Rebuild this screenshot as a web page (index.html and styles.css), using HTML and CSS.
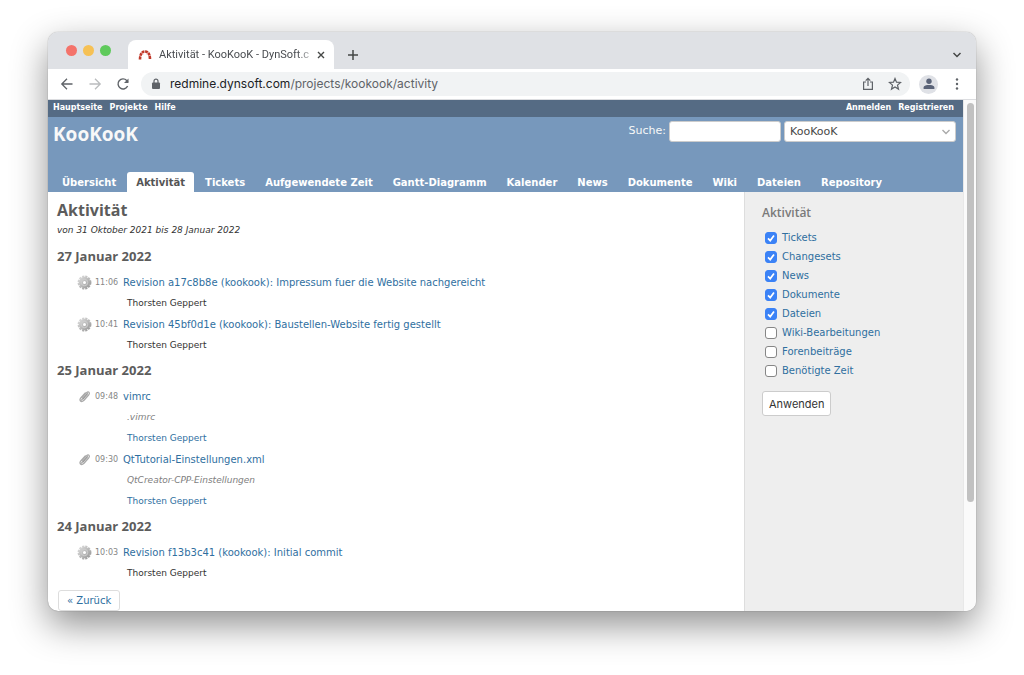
FILE: index.html
```html
<!DOCTYPE html>
<html lang="de">
<head>
<meta charset="utf-8">
<title>Aktivität - KooKooK - DynSoft.com</title>
<link rel="stylesheet" href="styles.css">
</head>
<body>
<svg class="defs" aria-hidden="true">
  <defs>
    <linearGradient id="metal" x1="0" y1="0" x2="1" y2="1"><stop offset="0" stop-color="#dedede"/><stop offset="1" stop-color="#979797"/></linearGradient>
    <symbol id="gear" viewBox="0 0 16 16">
      <circle cx="8" cy="8" r="6.4" fill="none" stroke="url(#metal)" stroke-width="2" stroke-dasharray="2.35 1"/>
      <circle cx="8" cy="8" r="6.1" fill="url(#metal)"/>
      <circle cx="8" cy="8" r="3.4" fill="none" stroke="#cfcfcf" stroke-width="1"/>
      <circle cx="8" cy="8" r="1.6" fill="#fff"/>
    </symbol>
    <symbol id="clip" viewBox="0 0 16 16">
      <path d="M4.4 12.2 11.200 4.600M6.400 12.600 12 6.500M5.200 9.200 9.800 4.200Q11.800 2.200 12.900 3.600 13.800 5 12.400 6.500L7.500 12Q5.200 14.200 3.700 12.800 2.400 11.400 4.200 9.200L8.800 4.200" fill="none" stroke="#aaa" stroke-width="1.3" stroke-linecap="round"/>
      <path d="M6 11 11.300 5.200" stroke="#888" stroke-width=".9"/>
    </symbol>
  </defs>
</svg>
<div class="window">
  <div class="tabstrip">
    <div class="lights"><span class="light red"></span><span class="light yellow"></span><span class="light green"></span></div>
    <div class="browser-tab">
      <svg class="favicon" viewBox="0 0 14 12" fill="none"><path d="M2 10.5C2 6 3.6 2.5 7 2.5S12 6 12 10.5" stroke="#c0392b" stroke-width="2.6" stroke-dasharray="2.9 .6"/><path d="M4 3.6 5 5.6M10 3.6 9 5.6" stroke="#e88" stroke-width=".7"/></svg>
      <span class="tab-title">Aktivität - KooKooK - DynSoft.c</span>
      <button class="icon-btn" aria-label="Tab schließen"><svg width="10" height="10" viewBox="0 0 10 10"><path d="M2 2l6 6M8 2L2 8" stroke="#454746" stroke-width="1.4"/></svg></button>
    </div>
    <button class="icon-btn new-tab" aria-label="Neuer Tab"><svg width="12" height="12" viewBox="0 0 12 12"><path d="M6 1v10M1 6h10" stroke="#454746" stroke-width="1.5"/></svg></button>
    <button class="icon-btn tab-search" aria-label="Tabs durchsuchen"><svg width="10" height="8" viewBox="0 0 10 8"><path d="M1.5 2 5 5.5 8.500 2" fill="none" stroke="#454746" stroke-width="1.5"/></svg></button>
  </div>
  <div class="toolbar">
    <button class="icon-btn" aria-label="Zurück"><svg width="14" height="14" viewBox="0 0 14 14" fill="none" stroke="#5f6368" stroke-width="1.3"><path d="M12.500 7H2M7 1.800 1.800 7 7 12.200"/></svg></button>
    <button class="icon-btn" aria-label="Vorwärts"><svg width="14" height="14" viewBox="0 0 14 14" fill="none" stroke="#babcbe" stroke-width="1.3"><path d="M1.500 7H12M7 1.800 12.200 7 7 12.200"/></svg></button>
    <button class="icon-btn" aria-label="Neu laden"><svg width="14" height="14" viewBox="0 0 14 14"><path d="M11.600 9A5 5 0 1 1 10.700 3.500L12 4.800" fill="none" stroke="#5f6368" stroke-width="1.4"/><path d="M12.500 1.500V6H8z" fill="#5f6368"/></svg></button>
    <div class="address">
      <svg width="10" height="12" viewBox="0 0 10 12"><rect x="1" y="4.500" width="8" height="6.500" rx="1" fill="#5f6368"/><path d="M3 5V3.200a2 2 0 0 1 4 0V5" fill="none" stroke="#5f6368" stroke-width="1.200"/></svg>
      <span class="url">redmine.dynsoft.com<span class="path">/projects/kookook/activity</span></span>
      <button class="icon-btn" aria-label="Teilen"><svg width="12" height="14" viewBox="0 0 12 14" fill="none" stroke="#5f6368" stroke-width="1.200"><path d="M4 5H1.600v7.400h8.800V5H8M6 9V1.500M3.700 3.700 6 1.400 8.300 3.700"/></svg></button>
      <button class="icon-btn star" aria-label="Lesezeichen"><svg width="14" height="14" viewBox="0 0 14 14"><path d="M7 1.500 8.500 5.200 12.600 5.500 9.500 8.100 10.500 12.100 7 9.900 3.500 12.100 4.500 8.100 1.400 5.500 5.500 5.200z" fill="none" stroke="#5f6368" stroke-width="1.200"/></svg></button>
    </div>
    <button class="icon-btn avatar" aria-label="Profil"><svg width="12" height="12" viewBox="0 0 12 12" fill="#5a6378"><circle cx="6" cy="3.300" r="2.700"/><path d="M.6 11V9.600C.6 7.600 3.500 7 6 7s5.400.6 5.400 2.600V11z"/></svg></button>
    <button class="icon-btn" aria-label="Menü"><svg width="4" height="14" viewBox="0 0 4 14" fill="#5f6368"><circle cx="2" cy="2.500" r="1.200"/><circle cx="2" cy="7" r="1.200"/><circle cx="2" cy="11.500" r="1.200"/></svg></button>
  </div>
  <div class="viewport">
    <div class="page">
      <nav class="top-menu">
        <a href="#">Hauptseite</a><a href="#">Projekte</a><a href="#">Hilfe</a>
        <a href="#" class="push">Anmelden</a><a href="#">Registrieren</a>
      </nav>
      <header class="header">
        <div class="header-row">
          <h1>KooKooK</h1>
          <form class="search">
            <label for="q">Suche:</label>
            <input id="q" type="text">
            <select aria-label="Projekt"><option>KooKooK</option></select>
          </form>
        </div>
        <nav class="main-menu">
          <a href="#">Übersicht</a><a href="#" class="selected">Aktivität</a><a href="#">Tickets</a><a href="#">Aufgewendete Zeit</a><a href="#">Gantt-Diagramm</a><a href="#">Kalender</a><a href="#">News</a><a href="#">Dokumente</a><a href="#">Wiki</a><a href="#">Dateien</a><a href="#">Repository</a>
        </nav>
      </header>
      <div class="main">
        <main class="content">
          <h2>Aktivität</h2>
          <p class="subtitle">von 31 Oktober 2021 bis 28 Januar 2022</p>
          <h3>27 Januar 2022</h3>
          <dl>
            <dt><svg class="icon"><use href="#gear"/></svg><time>11:06</time><a href="#">Revision a17c8b8e (kookook): Impressum fuer die Website nachgereicht</a></dt>
            <dd>Thorsten Geppert</dd>
            <dt><svg class="icon"><use href="#gear"/></svg><time>10:41</time><a href="#">Revision 45bf0d1e (kookook): Baustellen-Website fertig gestellt</a></dt>
            <dd>Thorsten Geppert</dd>
          </dl>
          <h3>25 Januar 2022</h3>
          <dl>
            <dt><svg class="icon"><use href="#clip"/></svg><time>09:48</time><a href="#">vimrc</a></dt>
            <dd class="description">.vimrc</dd>
            <dd><a href="#">Thorsten Geppert</a></dd>
            <dt><svg class="icon"><use href="#clip"/></svg><time>09:30</time><a href="#">QtTutorial-Einstellungen.xml</a></dt>
            <dd class="description">QtCreator-CPP-Einstellungen</dd>
            <dd><a href="#">Thorsten Geppert</a></dd>
          </dl>
          <h3>24 Januar 2022</h3>
          <dl>
            <dt><svg class="icon"><use href="#gear"/></svg><time>10:03</time><a href="#">Revision f13b3c41 (kookook): Initial commit</a></dt>
            <dd>Thorsten Geppert</dd>
          </dl>
          <a href="#" class="previous">« Zurück</a>
        </main>
        <aside class="sidebar">
          <h3>Aktivität</h3>
          <form>
            <ul>
              <li><input type="checkbox" id="c1" checked><label for="c1">Tickets</label></li>
              <li><input type="checkbox" id="c2" checked><label for="c2">Changesets</label></li>
              <li><input type="checkbox" id="c3" checked><label for="c3">News</label></li>
              <li><input type="checkbox" id="c4" checked><label for="c4">Dokumente</label></li>
              <li><input type="checkbox" id="c5" checked><label for="c5">Dateien</label></li>
              <li><input type="checkbox" id="c6"><label for="c6">Wiki-Bearbeitungen</label></li>
              <li><input type="checkbox" id="c7"><label for="c7">Forenbeiträge</label></li>
              <li><input type="checkbox" id="c8"><label for="c8">Benötigte Zeit</label></li>
            </ul>
            <button type="button" class="apply">Anwenden</button>
          </form>
        </aside>
      </div>
    </div>
    <div class="scrollbar"><div class="thumb"></div></div>
  </div>
</div>
</body>
</html>
```
FILE: styles.css
```css
* { box-sizing: border-box; }
body {
  margin: 0;
  min-height: 100vh;
  padding: 32px 48px 64px;
  display: flex;
  background: #fff;
  color: #333;
  font: 10px/21px Verdana, "DejaVu Sans", sans-serif;
}
.defs { position: absolute; width: 0; height: 0; }
h1, h2, h3, p, dl, dd, ul { margin: 0; padding: 0; }
a { color: #2f6f9f; text-decoration: none; }
.window {
  flex: 1;
  min-width: 0;
  display: flex;
  flex-direction: column;
  border-radius: 10px;
  overflow: hidden;
  background: #fff;
  box-shadow: 0 0 1px rgba(0,0,0,.5), 0 14px 36px rgba(0,0,0,.44);
}
.icon-btn {
  flex: none;
  display: flex;
  align-items: center;
  justify-content: center;
  padding: 0;
  border: 0;
  background: none;
}

/* Browser frame */
.tabstrip {
  display: flex;
  align-items: center;
  height: 37px;
  padding-right: 14px;
  background: #dfe1e5;
  font: 11px/16px Roboto, sans-serif;
}
.lights { display: flex; gap: 6px; width: 80px; padding-left: 18px; }
.light { width: 11px; height: 11px; border-radius: 50%; }
.red { background: #f4736b; }
.yellow { background: #f6c155; }
.green { background: #5fca5c; }
.browser-tab {
  display: flex;
  align-items: center;
  align-self: flex-end;
  width: 206px;
  height: 29px;
  padding: 0 8px 0 10px;
  border-radius: 8px 8px 0 0;
  background: #fff;
  color: #494c50;
}
.favicon { width: 14px; height: 12px; margin-right: 7px; flex: none; }
.tab-title {
  flex: 1;
  white-space: nowrap;
  -webkit-mask-image: linear-gradient(90deg, #000 88%, transparent);
  mask-image: linear-gradient(90deg, #000 88%, transparent);
}
.new-tab { margin: 8px 0 0 13px; }
.tab-search { margin: 8px 0 0 auto; }
.toolbar {
  display: flex;
  align-items: center;
  gap: 14px;
  height: 31px;
  padding: 0 17px 0 12px;
  border-bottom: 1px solid #dcdde0;
}
.address {
  flex: 1;
  display: flex;
  align-items: center;
  height: 24px;
  margin-left: -3px;
  padding: 0 8px 0 10px;
  border-radius: 12px;
  background: #f1f3f4;
  color: #202124;
  font: 12px/16px Inter, sans-serif;
}
.url { flex: 1; margin-left: 9px; }
.path { color: #5f6368; }
.star { margin-left: 14px; }
.avatar { width: 19px; height: 19px; margin: 0 3px 0 -5px; border-radius: 50%; background: #dfe1e6; }

/* Page */
.viewport { flex: 1; display: flex; }
.page { flex: 1; min-width: 0; display: flex; flex-direction: column; }
.scrollbar {
  width: 13px;
  padding: 3px 3px 3px 4px;
  border-left: 1px solid #e8e8e8;
  background: #fafafa;
}
.thumb { width: 7px; height: 79%; margin-left: -1px; border-radius: 4px; background: #c1c1c1; }
.top-menu {
  display: flex;
  gap: 7px;
  height: 17px;
  padding: 0 9px 0 5px;
  background: #556b84;
  font-size: 8px;
  line-height: 16px;
  font-weight: bold;
}
.top-menu a { color: #fff; }
.push { margin-left: auto; }
.header { background: #7798bc; color: #f8f8f8; }
.header-row { display: flex; justify-content: space-between; height: 55px; padding: 4px 7px 0 5px; }
h1 { font: 700 19px/27px "Trebuchet MS", "Open Sans", sans-serif; }
.search { display: flex; gap: 3px; font-size: 11px; line-height: 20px; }
.search input {
  width: 112px;
  height: 21px;
  padding: 0 6px;
  border: 1px solid #ccc;
  border-radius: 3px;
  background: #fff;
}
.search select {
  appearance: none;
  width: 172px;
  height: 21px;
  padding: 0 5px;
  border: 1px solid #ccc;
  border-radius: 3px;
  color: #484848;
  font: 11px/18px Verdana, "DejaVu Sans", sans-serif;
  background: #fff url("data:image/svg+xml,%3Csvg xmlns='http://www.w3.org/2000/svg' width='8' height='6'%3E%3Cpath d='M.5 1 4 4.500 7.500 1' fill='none' stroke='%23aaa' stroke-width='1.400'/%3E%3C/svg%3E") no-repeat right 5px center;
}
.main-menu { display: flex; gap: 2px; padding-left: 5px; }
.main-menu a {
  height: 20px;
  padding: 0 9px;
  border-radius: 3px 3px 0 0;
  color: #fff;
  font-weight: bold;
  line-height: 21px;
  white-space: nowrap;
}
.main-menu .selected { background: #fff; color: #555; }
.main { flex: 1; display: flex; }
.content { flex: 1; padding: 6px 9px 0; }
h2, h3 { color: #5c5c5c; font-family: "Trebuchet MS", "Open Sans", sans-serif; font-weight: 700; }
h2 { font-size: 16px; line-height: 24px; }
h3 { font-size: 13px; line-height: 28px; padding-bottom: 2px; }
.subtitle { margin-bottom: 4px; font-size: 9px; line-height: 16px; font-style: italic; }
dl { padding-left: 20px; }
dt { display: flex; align-items: center; height: 21px; }
.icon { width: 15px; height: 15px; margin-right: 3px; }
time { width: 28px; color: #868686; font-size: 8px; }
dd { padding-left: 50px; font-size: 9px; }
.description { color: #808080; font-style: italic; }
.previous {
  display: inline-block;
  height: 21px;
  margin: 6px 0 0 1px;
  padding: 0 8px;
  border: 1px solid #ddd;
  border-radius: 3px;
  line-height: 19px;
}
.sidebar { width: 219px; padding: 7px 17px; border-left: 1px solid #ddd; background: #eee; }
.sidebar h3 { font-size: 12px; color: #7a7a7a; font-weight: 600; padding: 0; }
.sidebar ul { list-style: none; padding: 1px 0 0 3px; }
.sidebar li { display: flex; align-items: center; gap: 5px; height: 19px; color: #2f6f9f; line-height: 19px; }
.sidebar input {
  appearance: none;
  width: 12px;
  height: 12px;
  margin: 0;
  border: 1px solid #868686;
  border-radius: 3px;
  background: #fff;
}
.sidebar input:checked {
  border-color: #3b82f6;
  background: #3b82f6 url("data:image/svg+xml,%3Csvg xmlns='http://www.w3.org/2000/svg' width='10' height='10'%3E%3Cpath d='M2 5.400 4.200 7.600 8 2.400' fill='none' stroke='%23fff' stroke-width='1.700'/%3E%3C/svg%3E") center no-repeat;
}
.apply {
  height: 25px;
  margin-top: 11px;
  padding: 0 6px;
  border: 1px solid #ccc;
  border-radius: 3px;
  background: #fff;
  color: #333;
  font: 11px/20px Inter, sans-serif;
}
```
